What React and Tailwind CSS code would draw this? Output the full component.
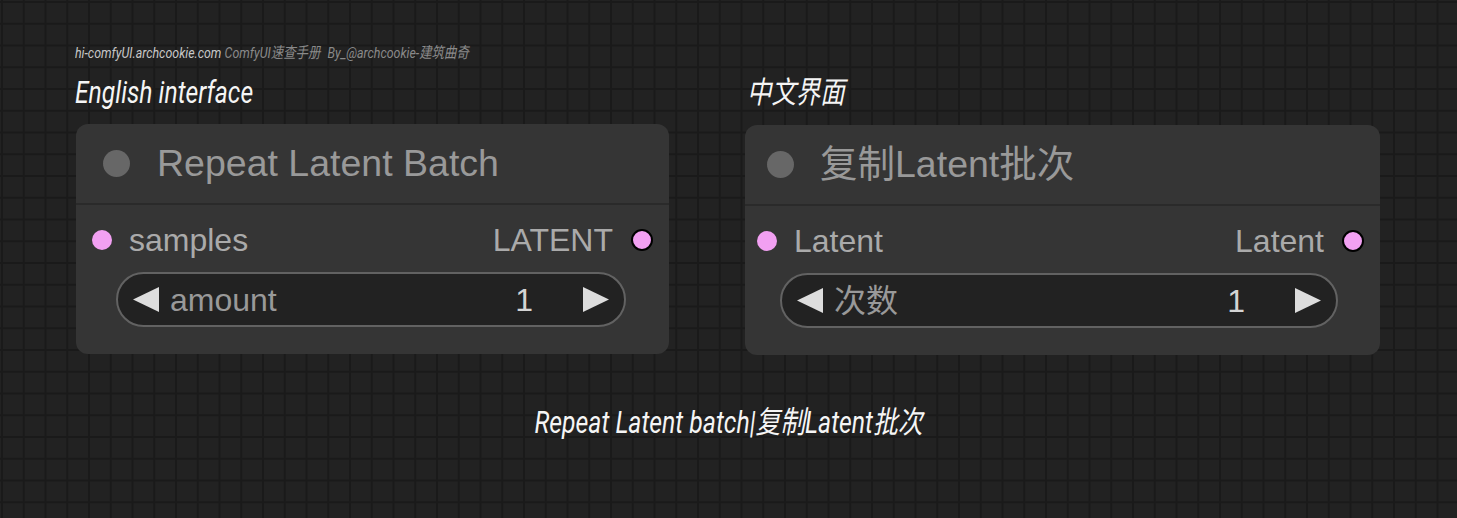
import React from "react";

const Arrow = ({ dir }) => (
  <svg width="26" height="25" viewBox="0 0 26 25" className="shrink-0">
    <polygon
      points={dir === "left" ? "26,0 26,25 0,12.5" : "0,0 0,25 26,12.5"}
      fill="#dddddd"
    />
  </svg>
);

const Node = ({ title, input, output, widget, value, className, titleClass, rowClass, widgetClass }) => (
  <div className={`h-[230px] rounded-[12px] bg-[#353535] flex flex-col font-['Liberation_Sans','Noto_Sans_CJK_SC',sans-serif] ${className}`}>
    {/* Title bar */}
    <div className={`h-[81px] shrink-0 flex items-center border-b-2 border-[#2a2a2a] ${titleClass}`}>
      <div className="w-[27px] h-[27px] rounded-full bg-[#676767] shrink-0" />
      <span className="text-[37.5px] text-[#999999] whitespace-nowrap">{title}</span>
    </div>

    {/* Slots */}
    <div className={`mt-[15px] h-[40px] flex items-center pr-[16px] text-[32px] text-[#aaaaaa] ${rowClass}`}>
      <div className="w-[20px] h-[20px] rounded-full bg-[#f2a0f2] shrink-0" />
      <span className="ml-[17px]">{input}</span>
      <span className="ml-auto mr-[18px]">{output}</span>
      <div className="w-[22px] h-[22px] rounded-full bg-[#f2a0f2] border-2 border-black shrink-0" />
    </div>

    {/* Number widget */}
    <div className={`mt-[12px] h-[55px] rounded-full border-2 border-[#626262] bg-[#222222] flex items-center px-[15px] text-[32px] ${widgetClass}`}>
      <Arrow dir="left" />
      <span className="ml-[11px] text-[#999999]">{widget}</span>
      <span className="ml-auto text-[#d4d4d4]">{value}</span>
      <span className="ml-[50px] flex">
        <Arrow dir="right" />
      </span>
    </div>
  </div>
);

export default function App() {
  return (
    <div className="w-[1457px] h-[518px] overflow-hidden bg-[#222222] bg-[linear-gradient(to_right,#1a1a1a_2px,transparent_2px),linear-gradient(to_bottom,#1a1a1a_2px,transparent_2px)] bg-[size:21.75px_21.75px] bg-[position:1px_1px] flex flex-col">
      <div className="pl-[75px] pt-[44px] font-['Roboto','Noto_Sans_CJK_SC',sans-serif] italic">
        <div className="h-[19px] leading-[19px] text-[15.5px] whitespace-nowrap">
          <span className="inline-block origin-left scale-x-[0.8]">
            <span className="text-[#c8c8c8]">hi-comfyUI.archcookie.com</span>
            <span className="text-[#8a8a8a] ml-[4px]">ComfyUI速查手册</span>
            <span className="text-[#8a8a8a] ml-[9px]">By_@archcookie-建筑曲奇</span>
          </span>
        </div>

        <div className="mt-[12px] flex items-start gap-[78px]">
          <div className="flex flex-col">
            <div className="h-[36px] leading-[36px] text-[30.5px] text-[#f5f5f5] whitespace-nowrap">
              <span className="inline-block origin-left scale-x-[0.81]">English interface</span>
            </div>
            <Node
              className="mt-[13px] ml-[1px] w-[593px] not-italic"
              titleClass="pl-[27px] gap-[27px]"
              rowClass="pl-[16px]"
              widgetClass="ml-[40px] mr-[43px]"
              title="Repeat Latent Batch"
              input="samples"
              output="LATENT"
              widget="amount"
              value="1"
            />
          </div>
          <div className="flex flex-col">
            <div className="h-[36px] leading-[36px] text-[30.5px] text-[#f5f5f5] whitespace-nowrap">
              <span className="inline-block origin-left scale-x-[0.8]">中文界面</span>
            </div>
            <Node
              className="mt-[14px] -ml-[2px] w-[635px] not-italic"
              titleClass="pl-[22px] gap-[26px]"
              rowClass="pl-[12px]"
              widgetClass="ml-[35px] mr-[42px]"
              title="复制Latent批次"
              input="Latent"
              output="Latent"
              widget="次数"
              value="1"
            />
          </div>
        </div>
      </div>

      <div className="mt-[49px] flex justify-center font-['Roboto','Noto_Sans_CJK_SC',sans-serif] italic">
        <span className="inline-block h-[38px] leading-[38px] text-[31px] text-[#f5f5f5] whitespace-nowrap scale-x-[0.8]">
          Repeat Latent batch|复制Latent批次
        </span>
      </div>
    </div>
  );
}
